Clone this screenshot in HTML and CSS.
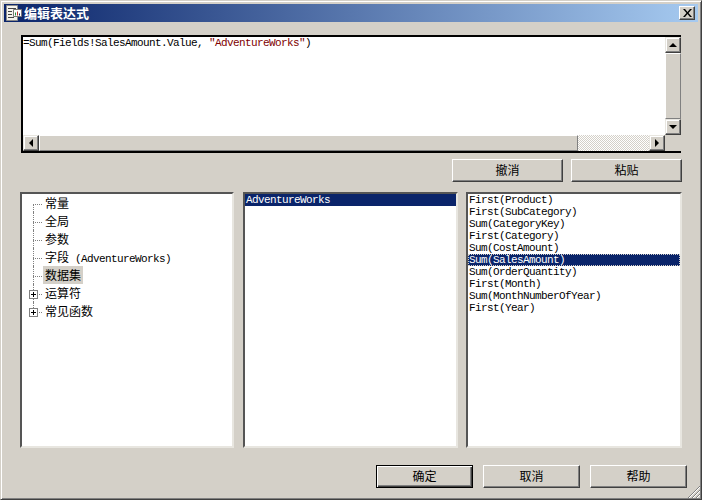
FILE: index.html
```html
<!DOCTYPE html>
<html lang="zh">
<head>
<meta charset="utf-8">
<title>编辑表达式</title>
<link rel="stylesheet" href="styles.css">
</head>
<body>
<div class="dialog">
  <div class="titlebar">
    <svg class="app-icon" width="16" height="16" viewBox="0 0 16 16">
      <path d="M.5.5h11v15H.5z" fill="#f4f2ec" stroke="#8a8a8a"/>
      <path d="M2 3.500h8M2 6.500h4M2 9.500h4M2 12.500h6" stroke="#444" fill="none"/>
      <path d="M7.500 4.500h8v7h-8z" fill="#fff" stroke="#777"/>
      <path d="M9.500 10.500v-3" stroke="#2a8a3a" fill="none"/>
      <path d="M11.500 10.500v-4" stroke="#c03030" fill="none"/>
      <path d="M13.500 10.500v-2" stroke="#0a246a" fill="none"/>
    </svg>
    <span class="title-text">编辑表达式</span>
    <button class="close" aria-label="关闭">
      <svg width="9" height="8" viewBox="0 0 9 8"><path d="M0 0h2l2.5 3L7 0h2L5.500 4 9 8H7L4.500 5 2 8H0l3.500-4z" fill="#000"/></svg>
    </button>
  </div>

  <div class="content">
    <div class="editor">
      <div class="editor-text">=Sum(Fields!SalesAmount.Value, <span class="str">"AdventureWorks"</span>)</div>
      <div class="vscroll">
        <span class="sb-btn"><i class="arrow up"></i></span>
        <span class="sb-thumb-v"></span>
        <span class="sb-btn"><i class="arrow down"></i></span>
      </div>
      <div class="hscroll">
        <span class="sb-btn"><i class="arrow left"></i></span>
        <span class="sb-thumb-h"></span>
        <span class="sb-track"></span>
        <span class="sb-btn"><i class="arrow right"></i></span>
      </div>
      <div class="sb-corner"></div>
    </div>

    <div class="edit-actions">
      <button class="btn wide">撤消</button>
      <button class="btn wide">粘贴</button>
    </div>

    <div class="panes">
      <ul class="pane tree">
        <li class="node"><span class="label">常量</span></li>
        <li class="node"><span class="label">全局</span></li>
        <li class="node"><span class="label">参数</span></li>
        <li class="node"><span class="label">字段<span class="latin"> (AdventureWorks)</span></span></li>
        <li class="node"><span class="label current">数据集</span></li>
        <li class="node"><i class="plus"></i><span class="label">运算符</span></li>
        <li class="node last"><i class="plus"></i><span class="label">常见函数</span></li>
      </ul>
      <ul class="pane pane-mid list">
        <li class="selected">AdventureWorks</li>
      </ul>
      <ul class="pane list">
        <li>First(Product)</li>
        <li>First(SubCategory)</li>
        <li>Sum(CategoryKey)</li>
        <li>First(Category)</li>
        <li>Sum(CostAmount)</li>
        <li class="selected focus">Sum(SalesAmount)</li>
        <li>Sum(OrderQuantity)</li>
        <li>First(Month)</li>
        <li>Sum(MonthNumberOfYear)</li>
        <li>First(Year)</li>
      </ul>
    </div>

    <div class="dialog-actions">
      <button class="btn dlg default">确定</button>
      <button class="btn dlg">取消</button>
      <button class="btn dlg">帮助</button>
    </div>
  </div>
  <svg class="grip" width="14" height="14" viewBox="0 0 14 14">
    <path d="M13 1L1 13M13 5L5 13M13 9L9 13" stroke="#808080" fill="none"/>
    <path d="M13 2L2 13M13 6L6 13M13 10L10 13" stroke="#fff" fill="none"/>
  </svg>
</div>
</body>
</html>
```
FILE: styles.css
```css
* { box-sizing: border-box; }
html, body { margin: 0; padding: 0; background: #d4d0c8; }
body {
  width: 702px;
  height: 500px;
  overflow: hidden;
  font-family: "Liberation Mono", "Noto Sans CJK SC", monospace;
  font-size: 11px;
  letter-spacing: -0.6px;
  color: #000;
}
ul { list-style: none; margin: 0; padding: 0; }

.dialog {
  position: relative;
  width: 702px;
  height: 500px;
  padding: 4px;
  background: #d4d0c8;
  border: 1px solid;
  border-color: #d4d0c8 #404040 #404040 #d4d0c8;
  box-shadow: inset 1px 1px 0 #fff, inset -1px -1px 0 #808080;
  display: flex;
  flex-direction: column;
}

.titlebar {
  height: 18px;
  margin: -1px -1px 0 -1px;
  padding: 0 3px 0 2px;
  display: flex;
  align-items: center;
  background: linear-gradient(90deg, #0a246a, #a6caf0);
  flex: none;
}
.app-icon { flex: none; margin-right: 2px; }
.title-text {
  flex: 1;
  padding-bottom: 1px;
  font: bold 13px "Noto Sans CJK SC", sans-serif;
  letter-spacing: 0;
  color: #fff;
}
.close {
  width: 16px;
  height: 14px;
  padding: 0;
  background: #d4d0c8;
  border: 1px solid;
  border-color: #fff #404040 #404040 #fff;
  box-shadow: inset -1px -1px 0 #808080;
  display: flex;
  align-items: center;
  justify-content: center;
}

.content {
  flex: 1;
  padding: 13px 0 0 15px;
  display: flex;
  flex-direction: column;
}

.editor {
  width: 660px;
  height: 118px;
  margin-left: 1px;
  background: #fff;
  border: 2px solid #000;
  border-right: 0;
  display: grid;
  grid-template-columns: 1fr 16px;
  grid-template-rows: 1fr 16px;
}
.editor-text { padding: 0; line-height: 12px; white-space: pre; }
.str { color: #800000; }

.vscroll { display: flex; flex-direction: column; background: #d4d0c8; }
.hscroll { display: flex; }
.sb-corner { background: #d4d0c8; }
.sb-btn {
  flex: none;
  width: 16px;
  height: 16px;
  background: #d4d0c8;
  border: 1px solid;
  border-color: #e8e6e0 #404040 #404040 #e8e6e0;
  box-shadow: inset -1px -1px 0 #808080, inset 1px 1px 0 #fff;
  display: flex;
  align-items: center;
  justify-content: center;
}
.sb-thumb-v {
  flex: 1;
  border: 1px solid;
  border-color: #fff #808080 #808080 #fff;
  background: #d4d0c8;
}
.sb-thumb-h {
  width: 539px;
  border: 1px solid;
  border-color: #fff #808080 #808080 #fff;
  background: #d4d0c8;
}
.sb-track {
  flex: 1;
  background-color: #fff;
  background-image: conic-gradient(#d4d0c8 25%, #fff 0 50%, #d4d0c8 0 75%, #fff 0);
  background-size: 2px 2px;
}
.arrow { display: block; width: 0; height: 0; border-style: solid; border-color: transparent; }
.arrow.up { border-width: 0 4px 4px; border-bottom-color: #000; }
.arrow.down { border-width: 4px 4px 0; border-top-color: #000; }
.arrow.left { border-width: 4px 4px 4px 0; border-right-color: #000; }
.arrow.right { border-width: 4px 0 4px 4px; border-left-color: #000; }

.btn {
  padding: 0 0 2px;
  background: #d4d0c8;
  border: 1px solid;
  border-color: #fff #404040 #404040 #fff;
  box-shadow: inset -1px -1px 0 #808080;
  font: 12px "Noto Sans CJK SC", sans-serif;
  letter-spacing: 0;
  color: #000;
}
.edit-actions {
  margin-top: 6px;
  margin-right: 15px;
  display: flex;
  justify-content: flex-end;
  gap: 8px;
}
.btn.wide { width: 111px; height: 23px; }

.panes {
  margin-top: 10px;
  display: grid;
  grid-template-columns: 214px 216px 216px;
  column-gap: 8px;
  height: 256px;
}
.pane {
  height: 256px;
  overflow: hidden;
  background: #fff;
  border: 2px solid;
  border-color: #555 #e8e6e0 #e8e6e0 #555;
}
.pane-mid { margin-left: 1px; }

.node {
  position: relative;
  height: 18px;
  padding-left: 21px;
  font: 12px/17px "Noto Sans CJK SC", sans-serif;
  letter-spacing: 0;
}
.node::before {
  content: "";
  position: absolute;
  left: 11px;
  top: 10px;
  width: 9px;
  border-top: 1px dotted #808080;
}
.node::after {
  content: "";
  position: absolute;
  left: 11px;
  top: 0;
  height: 18px;
  border-left: 1px dotted #808080;
}
.node:first-child::after { top: 10px; height: 8px; }
.node.last::after { height: 10px; }
.label { display: inline-block; height: 18px; padding: 0 2px; white-space: pre; }
.label.current { background: #d4d0c8; }
.latin { font: 11px "Liberation Mono", monospace; letter-spacing: -0.6px; }
.plus {
  position: absolute;
  z-index: 1;
  left: 7px;
  top: 6px;
  width: 9px;
  height: 9px;
  border: 1px solid #808080;
  background:
    linear-gradient(#000, #000) center / 5px 1px no-repeat,
    linear-gradient(#000, #000) center / 1px 5px no-repeat,
    #fff;
}

.list li {
  height: 12px;
  padding-left: 1px;
  line-height: 12px;
  white-space: pre;
}
.list li.selected { background: #0a246a; color: #fff; }
.list li.focus { outline: 1px dotted #d4d0c8; outline-offset: -1px; }

.dialog-actions {
  margin-top: 17px;
  margin-right: 10px;
  display: flex;
  justify-content: flex-end;
  gap: 10px;
}
.btn.dlg { width: 97px; height: 23px; }
.btn.default { border: 1px solid #000; box-shadow: inset 1px 1px 0 #fff, inset -1px -1px 0 #404040, inset -2px -2px 0 #808080; }

.grip { position: absolute; right: 0; bottom: 0; }
```
